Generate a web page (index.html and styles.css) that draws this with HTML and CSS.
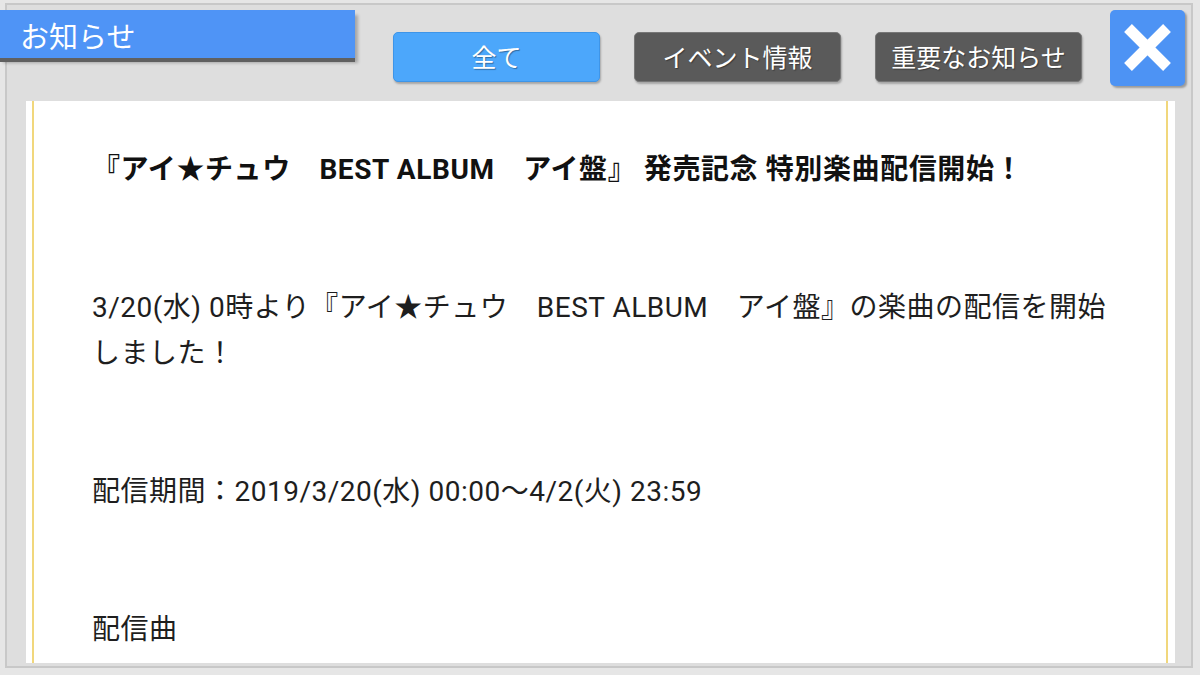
FILE: index.html
```html
<!DOCTYPE html>
<html lang="ja">
<head>
<meta charset="utf-8">
<link rel="stylesheet" href="styles.css">
</head>
<body>
<div class="frame">
  <div class="header">
    <div class="tab">お知らせ</div>
    <div class="btn btn-blue btn-all">全て</div>
    <div class="btn btn-gray">イベント情報</div>
    <div class="btn btn-gray">重要なお知らせ</div>
    <div class="close">
      <svg width="75" height="76" viewBox="0 0 75 76">
        <line x1="18" y1="18" x2="57" y2="57" stroke="#fff" stroke-width="11"/>
        <line x1="57" y1="18" x2="18" y2="57" stroke="#fff" stroke-width="11"/>
      </svg>
    </div>
  </div>
  <div class="panel">
    <div class="inner">
      <p class="title">『アイ★チュウ　BEST ALBUM　アイ盤』 発売記念 特別楽曲配信開始！</p>
      <p class="para">3/20(水) 0時より『アイ★チュウ　BEST ALBUM　アイ盤』の楽曲の配信を開始しました！</p>
      <p class="para">配信期間：2019/3/20(水) 00:00～4/2(火) 23:59</p>
      <p class="para">配信曲</p>
    </div>
  </div>
</div>
</body>
</html>
```
FILE: styles.css
```css
html, body {
  margin: 0;
  padding: 0;
}
body {
  width: 1200px;
  height: 675px;
  overflow: hidden;
  background: #e6e6e6;
  font-family: "Roboto", "Noto Sans CJK JP", sans-serif;
}
.frame {
  box-sizing: border-box;
  margin: 3px 0 0 5px;
  width: 1188px;
  height: 665px;
  border: 2px solid #c8c8c8;
  background: #dedede;
  display: flex;
  flex-direction: column;
}
.header {
  height: 96px;
  display: flex;
  align-items: flex-start;
  flex-shrink: 0;
}
.tab {
  margin: 5px 0 0 -7px;
  width: 355px;
  height: 48px;
  box-sizing: border-box;
  padding-left: 20px;
  background: #4f94f6;
  color: #fff;
  font-family: "Noto Sans CJK JP", sans-serif;
  font-size: 29px;
  line-height: 50px;
  box-shadow: 0 4px 0 #606060, 3px 5px 3px rgba(0,0,0,0.25);
}
.btn {
  margin-top: 27px;
  width: 207px;
  height: 50px;
  box-sizing: border-box;
  border-radius: 5px;
  color: #fff;
  font-family: "Noto Sans CJK JP", sans-serif;
  font-size: 25px;
  line-height: 47px;
  text-align: center;
  text-shadow: 1px 1px 1px rgba(0,0,0,0.35);
  box-shadow: 1px 2px 2px rgba(0,0,0,0.25);
}
.btn-blue {
  margin-left: 38px;
  background: #4ca7fb;
  border: 1px solid #3e95e8;
}
.btn-gray {
  margin-left: 34px;
  background: #5a5a5a;
  border: 1px solid #777;
}
.close {
  margin: 5px 0 0 28px;
  width: 75px;
  height: 76px;
  border-radius: 5px;
  background: #4d93f4;
  box-shadow: 2px 2px 2px rgba(0,0,0,0.3);
}
.close svg {
  display: block;
}
.panel {
  flex: 1;
  margin: 0 16px 3px 19px;
  background: #fff;
  overflow: hidden;
  display: flex;
}
.inner {
  flex: 1;
  margin: 0 7px 0 6px;
  border-left: 2px solid #f1d77c;
  border-right: 2px solid #f1d77c;
  padding: 46px 40px 0 58px;
  color: #1e1e1e;
  font-size: 28px;
  line-height: 46px;
  letter-spacing: 0.5px;
}
.inner p {
  margin: 0 0 92px 0;
}
.title {
  font-weight: bold;
  font-size: 28px;
  letter-spacing: 0.6px;
  color: #111;
}
```
